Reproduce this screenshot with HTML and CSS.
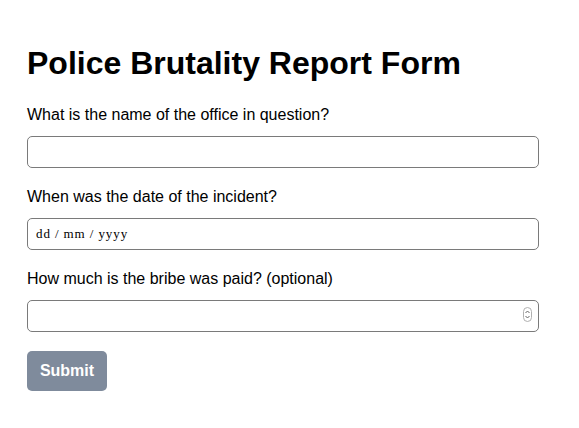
FILE: index.html
```html
<!DOCTYPE html>
<html lang="en">
<head>
<meta charset="utf-8">
<title>Police Brutality Report Form</title>
<link rel="stylesheet" href="styles.css">
</head>
<body>
<main class="page">
  <h1 class="title">Police Brutality Report Form</h1>
  <form class="form">
    <label class="field">
      <span class="label">What is the name of the office in question?</span>
      <input class="input" type="text">
    </label>
    <label class="field">
      <span class="label">When was the date of the incident?</span>
      <input class="input input-date" type="text" placeholder="dd / mm / yyyy">
    </label>
    <label class="field">
      <span class="label">How much is the bribe was paid? (optional)</span>
      <span class="number-wrap">
        <input class="input" type="text" inputmode="numeric">
        <span class="spinner" aria-hidden="true">
          <svg width="7" height="11" viewBox="0 0 7 11"><path d="M1.5 4 L3.5 2 L5.5 4 M1.5 7 L3.5 9 L5.5 7" fill="none" stroke="#666" stroke-width="1"/></svg>
        </span>
      </span>
    </label>
    <button class="submit" type="button">Submit</button>
  </form>
</main>
</body>
</html>
```
FILE: styles.css
```css
* { box-sizing: border-box; }
html, body { margin: 0; padding: 0; background: #fff; }
body { font-family: "Liberation Sans", Arial, sans-serif; color: #000; }
.page { padding: 45px 40px 0 27px; }
.title { margin: 0; font-size: 32px; font-weight: 700; line-height: 37px; }
.form { display: flex; flex-direction: column; margin-top: 24px; }
.field { display: flex; flex-direction: column; margin-bottom: 20px; }
.label { font-size: 16px; line-height: 18px; margin-bottom: 12px; }
.input {
  display: block; width: 512px; height: 32px;
  border: 1px solid #7a7a7a; border-radius: 5px;
  background: #fff; padding: 0 8px; font-size: 13px;
  font-family: "Liberation Sans", Arial, sans-serif; outline: none;
}
.input-date { font-family: "Liberation Serif", "Times New Roman", serif; font-size: 13px; letter-spacing: 0.9px; }
.input-date::placeholder { color: #000; opacity: 1; }
.number-wrap { position: relative; display: block; width: 512px; }
.spinner {
  position: absolute; right: 7px; top: 7px;
  width: 9px; height: 15px; border: 1px solid #b0b0b0; border-radius: 5px;
  display: flex; align-items: center; justify-content: center; background: #fff;
}
.spinner svg { display: block; }
.submit {
  align-self: flex-start; width: 80px; height: 40px; margin-top: -1px;
  background: #7f8b9c; color: #fff; border: none; border-radius: 5px;
  font-family: "Liberation Sans", Arial, sans-serif; font-weight: 700; font-size: 16px;
  padding: 0;
}
```
